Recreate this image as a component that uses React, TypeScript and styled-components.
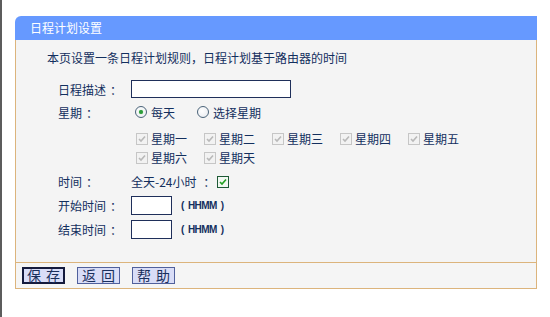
import React from 'react'
import styled, { createGlobalStyle, css } from 'styled-components'

const GlobalStyle = createGlobalStyle`
  html, body {
    margin: 0;
    padding: 0;
    background: #ffffff;
  }
  body {
    font-family: "Noto Sans CJK SC", "Liberation Sans", sans-serif;
    font-size: 12px;
    color: #132f5e;
    white-space: nowrap;
  }
`

const Page = styled.div`
  min-height: 317px;
  box-sizing: border-box;
  border-left: 2px solid #5c5c5c;
  padding: 16px 0 0 13px;
`

const Panel = styled.div`
  width: 522px;
`

const Header = styled.div`
  height: 24px;
  line-height: 24px;
  padding-left: 15px;
  background: #6699ff;
  color: #ffffff;
  font-size: 12px;
  border-top-left-radius: 6px;
`

const Body = styled.div`
  background: #f4f4f4;
  border-left: 1px solid #dcb47c;
  border-right: 1px solid #dcb47c;
  padding: 8px 0 21px 31px;
`

const Intro = styled.div`
  height: 20px;
  line-height: 20px;
`

const Form = styled.div`
  margin-top: 10px;
  padding-left: 11px;
`

const Row = styled.div<{ $h: number }>`
  display: flex;
  align-items: center;
  height: ${p => p.$h}px;
`

const Label = styled.div`
  width: 73px;
  flex: none;
`

const Colon = styled.span`
  display: inline-block;
  padding-left: 4px;
  width: 8px;
`

const TextInput = styled.input<{ $w: number; $h: number }>`
  box-sizing: border-box;
  width: ${p => p.$w}px;
  height: ${p => p.$h}px;
  margin: 0;
  padding: 0 2px;
  border: 1px solid #1f2f5a;
  background: #ffffff;
  font: inherit;
  outline: none;
`

const Options = styled.div<{ $pad: number }>`
  display: flex;
  align-items: center;
  padding-left: ${p => p.$pad}px;
`

const RadioItem = styled.label`
  display: inline-flex;
  align-items: center;
  width: 62px;
  gap: 4px;
`

const RadioDot = styled.span<{ $on?: boolean }>`
  box-sizing: border-box;
  width: 12px;
  height: 12px;
  border-radius: 50%;
  border: 1px solid #4b6479;
  background: radial-gradient(circle at 40% 40%, #ffffff 0%, #e6e9ee 100%);
  display: inline-flex;
  align-items: center;
  justify-content: center;
  flex: none;
  ${p => p.$on && css`
    &::after {
      content: '';
      width: 4px;
      height: 4px;
      border-radius: 50%;
      background: #2c9a3a;
      box-shadow: 0 0 1px #5ccc5c;
    }
  `}
`

const CheckGroup = styled.div`
  padding: 5px 0 3px 78px;
`

const CheckRow = styled.div`
  display: flex;
  align-items: center;
  height: 19px;
`

const CheckItem = styled.label`
  display: inline-flex;
  align-items: center;
  width: 68px;
  gap: 3px;
`

const Box = styled.span<{ $active?: boolean }>`
  box-sizing: border-box;
  width: 12px;
  height: 12px;
  flex: none;
  display: inline-flex;
  align-items: center;
  justify-content: center;
  border: 1px solid ${p => (p.$active ? '#1e5a36' : '#c6c6c6')};
  background: ${p => (p.$active ? '#f2f8f2' : '#f2f2f2')};
`

const AllDay = styled.div`
  display: flex;
  align-items: center;
  gap: 6px;
`

const Hint = styled.span`
  margin-left: 9px;
  font-family: "Liberation Sans", sans-serif;
  font-weight: bold;
  font-size: 10px;
  letter-spacing: -0.6px;
  word-spacing: 2px;
  color: #132f5e;
`

const Footer = styled.div`
  display: flex;
  gap: 12px;
  padding: 4px 0 4px 6px;
  background: #f5f5f5;
  border: 1px solid #dcb47c;
`

const Button = styled.button<{ $primary?: boolean }>`
  box-sizing: border-box;
  width: 43px;
  height: 17px;
  margin: 0;
  padding: 0;
  background: #d9ddf7;
  color: #1a2f5c;
  font-family: "Noto Sans CJK SC", sans-serif;
  font-size: 14px;
  line-height: 13px;
  word-spacing: 2px;
  border: ${p => (p.$primary ? '2px solid #141a3c' : '1px solid #50609c')};
`

function Check({ active }: { active?: boolean }) {
  return (
    <Box $active={active}>
      <svg width="8" height="8" viewBox="0 0 8 8">
        <path
          d="M1 4 L3 6 L7 1.5"
          fill="none"
          stroke={active ? '#22a022' : '#b9b9b9'}
          strokeWidth="1.6"
        />
      </svg>
    </Box>
  )
}

const week1 = ['星期一', '星期二', '星期三', '星期四', '星期五']
const week2 = ['星期六', '星期天']

export default function App() {
  return (
    <Page>
      <GlobalStyle />
      <Panel>
        <Header>日程计划设置</Header>
        <Body>
          <Intro>本页设置一条日程计划规则，日程计划基于路由器的时间</Intro>
          <Form>
            <Row $h={22}>
              <Label>日程描述<Colon>：</Colon></Label>
              <TextInput $w={160} $h={18} />
            </Row>
            <Row $h={24}>
              <Label>星期<Colon>：</Colon></Label>
              <Options $pad={4}>
                <RadioItem><RadioDot $on />每天</RadioItem>
                <RadioItem><RadioDot />选择星期</RadioItem>
              </Options>
            </Row>
            <CheckGroup>
              <CheckRow>
                {week1.map(d => (
                  <CheckItem key={d}><Check />{d}</CheckItem>
                ))}
              </CheckRow>
              <CheckRow>
                {week2.map(d => (
                  <CheckItem key={d}><Check />{d}</CheckItem>
                ))}
              </CheckRow>
            </CheckGroup>
            <Row $h={23}>
              <Label>时间<Colon>：</Colon></Label>
              <AllDay><span>全天-24小时 <Colon>：</Colon></span><Check active /></AllDay>
            </Row>
            <Row $h={24}>
              <Label>开始时间<Colon>：</Colon></Label>
              <TextInput $w={41} $h={19} />
              <Hint>( HHMM )</Hint>
            </Row>
            <Row $h={24}>
              <Label>结束时间<Colon>：</Colon></Label>
              <TextInput $w={41} $h={19} />
              <Hint>( HHMM )</Hint>
            </Row>
          </Form>
        </Body>
        <Footer>
          <Button $primary>保 存</Button>
          <Button>返 回</Button>
          <Button>帮 助</Button>
        </Footer>
      </Panel>
    </Page>
  )
}
